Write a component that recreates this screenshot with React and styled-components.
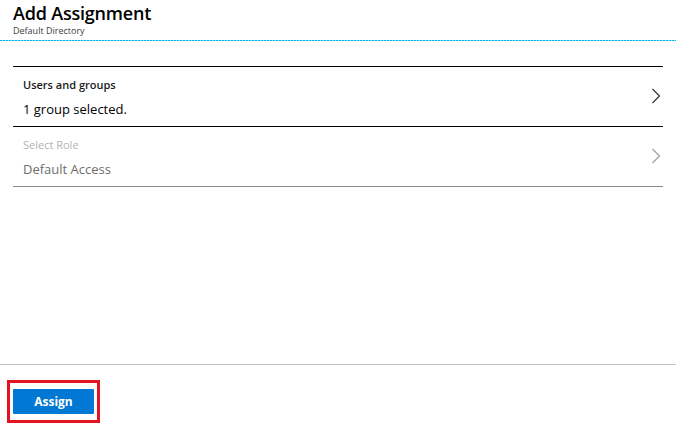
import React from "react";
import styled, { createGlobalStyle } from "styled-components";

const Global = createGlobalStyle`
  html, body { margin: 0; padding: 0; background: #fff; }
  body { font-family: "Open Sans", "Noto Sans", sans-serif; color: #000; }
`;

const Page = styled.div`
  width: 678px;
  height: 443px;
  display: flex;
  flex-direction: column;
  overflow: hidden;
`;

const Header = styled.header`
  padding: 1px 0 0 13px;
  height: 41px;
  box-sizing: border-box;
  margin-right: 2px;
  background-image: repeating-linear-gradient(90deg, #00b4ef 0 2px, #8fdcf6 2px 3px);
  background-size: 100% 1px;
  background-repeat: no-repeat;
  background-position: bottom left;
`;

const Title = styled.h1`
  margin: 0;
  font-size: 18px;
  font-weight: 600;
  line-height: 24px;
  letter-spacing: -0.2px;
`;

const Subtitle = styled.div`
  font-size: 9px;
  line-height: 11px;
  color: #404040;
`;

const Body = styled.main`
  flex: 1;
  padding: 25px 15px 0 13px;
`;

const Row = styled.div`
  display: flex;
  align-items: center;
  height: ${(p) => (p.$first ? 61 : 60)}px;
  box-sizing: border-box;
  border-top: ${(p) => (p.$first ? "1px solid #000" : "none")};
  border-bottom: 1px solid ${(p) => (p.$disabled ? "#8a8a8a" : "#000")};
  padding: 2px 2px 0 10px;
`;

const RowText = styled.div`
  flex: 1;
  display: flex;
  flex-direction: column;
`;

const Label = styled.div`
  font-size: 11px;
  line-height: 14px;
  font-weight: ${(p) => (p.$disabled ? 400 : 600)};
  color: ${(p) => (p.$disabled ? "#b3b3b3" : "#1a1a1a")};
  margin-bottom: 9px;
`;

const Value = styled.div`
  font-size: 13px;
  line-height: 17px;
  color: ${(p) => (p.$disabled ? "#6e6e6e" : "#000")};
`;

const Chevron = styled.svg`
  width: 10px;
  height: 16px;
  margin-top: -4px;
`;

const Footer = styled.footer`
  border-top: 1px solid #c4c4c4;
  margin-right: 2px;
  height: 79px;
  box-sizing: border-box;
  padding: 15px 0 0 7px;
`;

const Highlight = styled.div`
  display: inline-flex;
  border: 3px solid #e3141f;
  padding: 6px 3px 6px 3px;
`;

const Button = styled.button`
  width: 81px;
  height: 25px;
  border: none;
  border-radius: 1px;
  background: #0078d4;
  color: #fff;
  font-family: inherit;
  font-size: 12px;
  font-weight: 700;
  padding: 0;
`;

const ChevronIcon = ({ color }) => (
  <Chevron viewBox="0 0 10 16">
    <path d="M1.5 1 L8.5 8 L1.5 15" fill="none" stroke={color} strokeWidth="1.2" />
  </Chevron>
);

export default function App() {
  return (
    <Page>
      <Global />
      <Header>
        <Title>Add Assignment</Title>
        <Subtitle>Default Directory</Subtitle>
      </Header>
      <Body>
        <Row $first>
          <RowText>
            <Label>Users and groups</Label>
            <Value>1 group selected.</Value>
          </RowText>
          <ChevronIcon color="#333" />
        </Row>
        <Row $disabled>
          <RowText>
            <Label $disabled>Select Role</Label>
            <Value $disabled>Default Access</Value>
          </RowText>
          <ChevronIcon color="#a0a0a0" />
        </Row>
      </Body>
      <Footer>
        <Highlight>
          <Button>Assign</Button>
        </Highlight>
      </Footer>
    </Page>
  );
}
